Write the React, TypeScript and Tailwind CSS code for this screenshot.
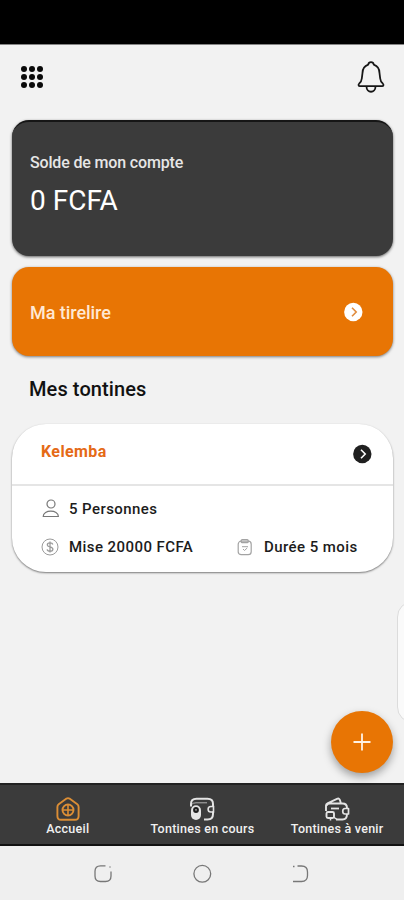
import type { ReactNode } from "react";

const GridIcon = () => (
  <svg viewBox="0 0 24 24" className="h-6 w-6" fill="#0a0a0a">
    {[4, 12, 20].map((y) =>
      [4, 12, 20].map((x) => <circle key={`${x}-${y}`} cx={x} cy={y} r="3" />)
    )}
  </svg>
);

const BellIcon = () => (
  <svg viewBox="0 0 28 34" className="h-[34px] w-7" fill="none" stroke="#161616" strokeWidth="1.8" strokeLinejoin="round">
    <path d="M11.2 4.6C11.8 1.4 16.2 1.4 16.8 4.6C20.5 6 22.5 9 22.5 13L23.2 18.5C23.5 21 24.3 22.6 25.8 23.6C26.9 24.5 26.6 26.2 25 26.2H3C1.4 26.2 1.1 24.5 2.2 23.6C3.7 22.6 4.5 21 4.8 18.5L5.5 13C5.5 9 7.5 6 11.2 4.6Z" />
    <path d="M9.5 26.5C9.5 33.5 18.5 33.5 18.5 26.5" />
  </svg>
);

const ChevronBadge = ({ fill, stroke }: { fill: string; stroke: string }) => (
  <svg viewBox="0 0 20 20" className="h-5 w-5" fill="none">
    <circle cx="10.3" cy="10" r="9.2" fill={fill} />
    <path d="M9 5.8L13.2 10L9 14.2" stroke={stroke} strokeWidth="1.6" />
  </svg>
);

const PersonIcon = () => (
  <svg viewBox="0 0 18 20" className="h-5 w-[18px]" fill="none" stroke="#777" strokeWidth="1.2">
    <circle cx="10" cy="5" r="4" />
    <path d="M2.2 17.5C2.2 10.3 17.4 10.3 17.4 17.5Z" strokeLinejoin="round" />
  </svg>
);

const CoinIcon = () => (
  <svg viewBox="0 0 18 18" className="h-[18px] w-[18px]" fill="none" stroke="#9a9a9a" strokeWidth="1">
    <circle cx="9" cy="9" r="8" />
    <path d="M11.8 6.5C11.3 4.4 6.3 4.4 6.3 6.9C6.3 9.3 11.9 8.5 11.9 11.2C11.9 13.8 6.5 13.7 6.1 11.4M9 3.5V14.5" strokeWidth="1.3" />
  </svg>
);

const ClipboardIcon = () => (
  <svg viewBox="0 0 16 18" className="ml-px h-[18px] w-4" fill="none" stroke="#a3a3a3" strokeWidth="1.2">
    <rect x="1.2" y="3.2" width="13" height="13.5" rx="3" />
    <rect x="4.2" y="1.7" width="7" height="3" rx="1" />
    <path d="M5 8.7H11M6 11L7.5 12.5L10.2 10" strokeWidth="1" />
  </svg>
);

const HomeIcon = () => (
  <svg viewBox="0 0 24 24" className="ml-px h-6 w-6" fill="none" stroke="#dc8e35" strokeWidth="1.9">
    <path d="M10.5 1.6Q12 .7 13.5 1.6L21.3 7.2Q22.6 8.2 22.6 10V19Q22.6 22.8 19 22.8H5Q1.4 22.8 1.4 19V10Q1.4 8.2 2.7 7.2Z" />
    <circle cx="12" cy="13" r="5.5" />
    <path d="M12 8V18M7 13H17" strokeWidth="1.6" />
  </svg>
);

const CurrentWalletIcon = () => (
  <svg viewBox="0 0 26 24" className="h-6 w-[26px]" fill="none" stroke="#e4e4e4" strokeWidth="2">
    <path d="M2 9.5V7Q2 1.8 7.5 1.8H18.5Q24 1.8 24 7V9.5M24 14.5V17Q24 22.5 18.5 22.5H15" />
    <path d="M2.5 7.5Q4 5.8 7 5.8H18" strokeWidth="1" opacity="0.7" />
    <path d="M24.5 9.5H21.8C18.2 9.5 18.2 15 21.8 15H24.5Z" strokeWidth="1.6" />
    <rect x="2" y="8.3" width="10" height="14.7" rx="5" fill="#e4e4e4" stroke="none" />
    <circle cx="7" cy="13" r="2.9" fill="#1c1c1c" stroke="none" />
    <circle cx="7" cy="12.8" r="0.9" fill="#aaa" stroke="none" />
  </svg>
);

const UpcomingWalletIcon = () => (
  <svg viewBox="0 0 26 24" className="h-6 w-[26px]" fill="none" stroke="#e4e4e4" strokeWidth="1.9" strokeLinejoin="round">
    <path d="M2 14V8.5Q2 7 3.5 6.3L13 1.8Q15 .9 15.8 2.8L17 6.5M2.5 8.5Q3.5 6.5 6 6.5H18.5Q23 6.5 23 11M23 17Q23 22.5 18.5 22.5H12" />
    <path d="M24.5 11.5H21C18 11.5 18 17 21 17H24.5Z" strokeWidth="1.7" />
    <path d="M7 11.5H15" strokeWidth="1.8" />
    <rect x="2.5" y="15" width="7.5" height="6" rx="1.5" />
    <path d="M6.5 20.5V23.5M9.5 20L13 22.5" strokeWidth="1.5" />
  </svg>
);

const Detail = ({ icon, children }: { icon: ReactNode; children: ReactNode }) => (
  <div className="flex items-center">
    <span className="flex w-7 shrink-0">{icon}</span>
    <span className="whitespace-nowrap text-[15px] leading-5 font-medium tracking-[0.43px] text-[#1c1c1c]">{children}</span>
  </div>
);

const tabs = [
  { label: "Accueil", icon: <HomeIcon /> },
  { label: "Tontines en cours", icon: <CurrentWalletIcon /> },
  { label: "Tontines à venir", icon: <UpcomingWalletIcon /> },
];

export default function App() {
  return (
    <div className="relative flex h-[900px] w-[404px] flex-col overflow-hidden bg-[#f2f2f2] font-['Roboto',sans-serif]">
      {/* Status bar */}
      <div className="h-[45px] shrink-0 border-b border-[#858585] bg-black" />

      <header className="flex h-[75px] shrink-0 items-start justify-between pt-[15px] pr-[19px] pl-5">
        <div className="pt-[5px]">
          <GridIcon />
        </div>
        <BellIcon />
      </header>

      <main className="flex flex-1 flex-col pr-[11px] pl-3">
        {/* Balance */}
        <section className="h-[136px] rounded-[17px] border-t-2 border-[#161616] bg-[#3b3b3b] pt-[31px] pl-[18px] shadow-[0_1px_3px_rgba(0,0,0,0.6)]">
          <p className="text-[16px] leading-5 font-medium tracking-[-0.16px] text-[#e6e6e6]">Solde de mon compte</p>
          <p className="mt-3 text-[28px] leading-8 text-white">0 FCFA</p>
        </section>

        <button className="mt-[11px] flex h-[89px] items-center justify-between rounded-[17px] bg-[#e87504] pr-[30px] pl-[18px] shadow-[0_1px_3px_rgba(0,0,0,0.5)]">
          <span className="pt-px text-[18px] font-medium tracking-[-0.05px] text-[#ffe8d3]">Ma tirelire</span>
          <ChevronBadge fill="#fff" stroke="#e08b3d" />
        </button>

        <h2 className="mt-[19px] pl-[17px] text-[20px] leading-7 font-medium tracking-[0.1px] text-[#111]">Mes tontines</h2>

        {/* Tontine card */}
        <section className="mt-[21px] h-[148px] rounded-[34px] bg-white shadow-[0_1px_2px_rgba(0,0,0,0.5)]">
          <div className="flex h-[62px] items-center justify-between border-b-2 border-[#e5e5e5] pr-[21px] pl-[29px]">
            <h3 className="pb-1 text-[16px] font-bold tracking-[0.4px] text-[#e56a16]">Kelemba</h3>
            <ChevronBadge fill="#202020" stroke="#fff" />
          </div>
          <div className="pt-[13px] pl-[29px]">
            <Detail icon={<PersonIcon />}>5 Personnes</Detail>
            <div className="mt-[18px] flex">
              <div className="w-[195px]">
                <Detail icon={<CoinIcon />}>Mise 20000 FCFA</Detail>
              </div>
              <Detail icon={<ClipboardIcon />}>Durée 5 mois</Detail>
            </div>
          </div>
        </section>
      </main>

      {/* Bottom tabs */}
      <nav className="grid h-[63px] shrink-0 grid-cols-3 border-y-2 border-t-[#222] border-b-[#111] bg-[#3b3b3b]">
        {tabs.map((tab) => (
          <div key={tab.label} className="flex flex-col items-center pt-3 pl-px">
            {tab.icon}
            <span className="text-[12.5px] leading-4 font-medium tracking-[0.25px] whitespace-nowrap text-[#f0f0f0]">{tab.label}</span>
          </div>
        ))}
      </nav>

      {/* System navigation */}
      <div className="flex h-[54px] shrink-0 items-center justify-center gap-[79px] bg-[#efefef] pt-px">
        <svg viewBox="0 0 20 20" className="h-5 w-5" fill="none" stroke="#777" strokeWidth="1.3">
          <path d="M12.5 1.8H7.5Q2 1.8 2 7.3V12Q2 17.5 7.5 17.5H12.5Q18 17.5 18 12V7.5M16.5 3H17.5" />
        </svg>
        <svg viewBox="0 0 20 20" className="h-5 w-5" fill="none" stroke="#777" strokeWidth="1.3">
          <circle cx="10.3" cy="9.8" r="8.4" />
        </svg>
        <svg viewBox="0 0 20 20" className="h-5 w-5" fill="none" stroke="#777" strokeWidth="1.3">
          <path d="M2 2.5H3.5M6.5 2H10.5Q16.5 2 16.5 8V11.5Q16.5 17.5 10.5 17.5H2" />
        </svg>
      </div>

      {/* Edge panel */}
      <div className="absolute top-[601px] left-[397px] h-[122px] w-10 rounded-[16px] border border-[#dcdcdc] bg-[#fafafa]" />

      <button className="absolute top-[711px] left-[331px] flex h-[62px] w-[62px] items-center justify-center rounded-full bg-[#e87504] shadow-[0_4px_8px_rgba(0,0,0,0.35)]">
        <svg viewBox="0 0 18 18" className="h-[18px] w-[18px]" stroke="#fff2e4" strokeWidth="1.8">
          <path d="M9 .5V17.5M.5 9H17.5" />
        </svg>
      </button>
    </div>
  );
}
